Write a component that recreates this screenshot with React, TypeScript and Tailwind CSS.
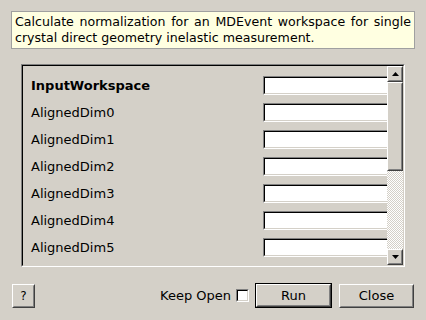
const font = { fontFamily: '"DejaVu Sans", sans-serif' };

const rows = [
  "InputWorkspace",
  "AlignedDim0",
  "AlignedDim1",
  "AlignedDim2",
  "AlignedDim3",
  "AlignedDim4",
  "AlignedDim5",
  "",
];

function Arrow({ up }: { up?: boolean }) {
  return (
    <svg width="7" height="4" viewBox="0 0 7 4">
      {up ? <polygon points="0,4 7,4 3.5,0" fill="#000" /> : <polygon points="0,0 7,0 3.5,4" fill="#000" />}
    </svg>
  );
}

function RaisedBox({ className, children }: { className?: string; children?: React.ReactNode }) {
  return (
    <div className={`border border-t-white border-l-white border-r-[#404040] border-b-[#404040] ${className ?? ""}`}>
      <div className="h-full w-full border border-t-[#d4d0c8] border-l-[#d4d0c8] border-r-[#808080] border-b-[#808080] flex items-center justify-center">
        {children}
      </div>
    </div>
  );
}

export default function App() {
  return (
    <div className="w-[426px] h-[320px] bg-[#d4d0c8] flex flex-col text-[13px] text-black overflow-hidden" style={font}>
      <div className="mt-[11px] mx-[11px] h-[38px] border border-[#a0a0a0] bg-[#ffffe1] px-[3px] pt-[2px] text-[12.6px] leading-[16px] text-justify [text-align-last:left]">
        Calculate normalization for an MDEvent workspace for single crystal direct geometry inelastic measurement.
      </div>

      <div className="mt-[15px] mx-[21px] h-[203px] border border-t-[#808080] border-l-[#808080] border-r-white border-b-white">
        <div className="h-full border border-t-black border-l-black border-r-[#d4d0c8] border-b-[#d4d0c8] flex">
          <div className="flex-1 min-w-0 overflow-hidden pt-[10px] pl-[8px] flex flex-col gap-[8px]">
            {rows.map((r, i) => (
              <div key={i} className="flex items-center h-[19px] shrink-0">
                <span className={`w-[232px] shrink-0 ${i === 0 ? "font-bold" : ""}`}>{r}</span>
                <div className="w-[140px] h-[19px] shrink-0 border border-t-[#808080] border-l-[#808080] border-r-white border-b-white">
                  <div className="h-full border border-t-black border-l-black border-r-[#d4d0c8] border-b-[#d4d0c8] bg-white" />
                </div>
              </div>
            ))}
          </div>
          <div className="w-[16px] shrink-0 flex flex-col bg-[repeating-conic-gradient(#d4d0c8_0_25%,#ffffff_0_50%)] bg-size-[2px_2px]">
            <RaisedBox className="h-[16px] bg-[#d4d0c8]">
              <Arrow up />
            </RaisedBox>
            <RaisedBox className="h-[89px] bg-[#d4d0c8]" />
            <div className="flex-1" />
            <RaisedBox className="h-[16px] bg-[#d4d0c8]">
              <Arrow />
            </RaisedBox>
          </div>
        </div>
      </div>

      <div className="mt-[16px] mx-[12px] flex items-center h-[25px]">
        <RaisedBox className="w-[23px] h-[24px]">
          <span className="text-[12px]">?</span>
        </RaisedBox>
        <div className="flex-1" />
        <span>Keep Open</span>
        <div className="ml-[5px] w-[13px] h-[13px] border border-t-[#808080] border-l-[#808080] border-r-white border-b-white">
          <div className="h-full border border-t-black border-l-black border-r-[#d4d0c8] border-b-[#d4d0c8] bg-white" />
        </div>
        <div className="ml-[6px] w-[77px] h-[25px] border border-black">
          <RaisedBox className="h-full w-full">Run</RaisedBox>
        </div>
        <RaisedBox className="ml-[7px] w-[75px] h-[24px]">Close</RaisedBox>
      </div>
    </div>
  );
}
